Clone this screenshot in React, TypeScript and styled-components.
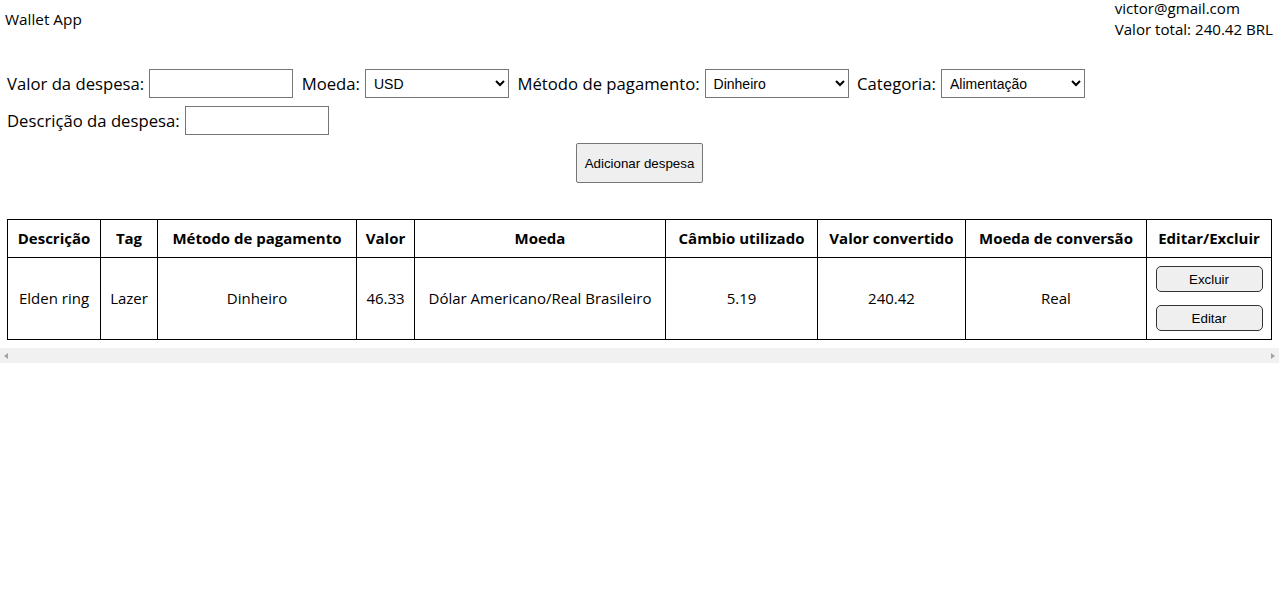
import React from 'react';
import styled, { createGlobalStyle } from 'styled-components';

const GlobalStyle = createGlobalStyle`
  body {
    margin: 0;
    background: #ffffff;
    color: #000000;
    font-family: 'Open Sans', 'Noto Sans', sans-serif;
    font-size: 15.3px;
  }
`;

const Page = styled.div`
  display: flex;
  flex-direction: column;
`;

const Header = styled.header`
  display: flex;
  justify-content: space-between;
  align-items: center;
  margin-top: -2px;
  padding: 0 6px 0 5px;
  line-height: 21px;
`;

const Brand = styled.span`
  font-size: 15.3px;
`;

const UserInfo = styled.div`
  display: flex;
  flex-direction: column;
  font-size: 15.1px;
`;

const Form = styled.form`
  display: flex;
  flex-wrap: wrap;
  align-items: center;
  column-gap: 8.5px;
  row-gap: 8px;
  padding: 0 7px;
  margin-top: 29px;
`;

const Field = styled.label`
  display: flex;
  align-items: center;
  gap: 5px;
  font-size: 16.7px;
  line-height: 21px;
`;

const TextInput = styled.input`
  box-sizing: border-box;
  width: 144px;
  height: 29px;
  border: 1px solid #767676;
  border-radius: 0;
  padding: 0 4px;
  font-family: Arial, 'Liberation Sans', sans-serif;
  font-size: 13.33px;
`;

const Select = styled.select`
  box-sizing: border-box;
  width: 144px;
  height: 29px;
  border: 1px solid #767676;
  border-radius: 0;
  background: #ffffff;
  padding: 0 4px;
  font-family: Arial, 'Liberation Sans', sans-serif;
  font-size: 14px;
  color: #000000;
`;

const Actions = styled.div`
  display: flex;
  justify-content: center;
  margin-top: 8px;
`;

const Button = styled.button<{ $wide?: boolean }>`
  box-sizing: border-box;
  height: ${p => (p.$wide ? '40px' : '26px')};
  width: ${p => (p.$wide ? 'auto' : '107px')};
  padding: 0 8px;
  background: #efefef;
  border: 1px solid ${p => (p.$wide ? '#767676' : '#333333')};
  border-radius: ${p => (p.$wide ? '2px' : '5px')};
  font-family: Arial, 'Liberation Sans', sans-serif;
  font-size: 13.33px;
  color: #000000;
  cursor: pointer;
`;

const TableArea = styled.div`
  margin-top: 36px;
  padding: 0 8px 0 7px;
`;

const Table = styled.table`
  width: 100%;
  table-layout: fixed;
  border-collapse: collapse;
  font-size: 15px;
  line-height: 21px;
`;

const Th = styled.th<{ $w: number }>`
  width: ${p => p.$w - 1}px;
  border: 1px solid #000000;
  padding: 8px 0;
  font-weight: 700;
  text-align: center;
  white-space: nowrap;
`;

const Td = styled.td`
  border: 1px solid #000000;
  padding: 8px 0;
  text-align: center;
  white-space: nowrap;
`;

const ButtonStack = styled.div`
  display: flex;
  flex-direction: column;
  align-items: center;
  gap: 13px;
`;

const ScrollBar = styled.div`
  margin-top: 8px;
  height: 15px;
  background: #f1f1f1;
  display: flex;
  justify-content: space-between;
  align-items: center;
  padding: 0 4px;
`;

const Arrow = styled.span<{ $dir: 'left' | 'right' }>`
  width: 0;
  height: 0;
  border-top: 3.5px solid transparent;
  border-bottom: 3.5px solid transparent;
  ${p =>
    p.$dir === 'left'
      ? 'border-right: 4px solid #a3a3a3;'
      : 'border-left: 4px solid #a3a3a3;'}
`;

const columns = [
  { label: 'Descrição', w: 93 },
  { label: 'Tag', w: 57 },
  { label: 'Método de pagamento', w: 199 },
  { label: 'Valor', w: 58 },
  { label: 'Moeda', w: 251 },
  { label: 'Câmbio utilizado', w: 152 },
  { label: 'Valor convertido', w: 148 },
  { label: 'Moeda de conversão', w: 181 },
  { label: 'Editar/Excluir', w: 125 },
];

const expenses = [
  {
    id: 0,
    description: 'Elden ring',
    tag: 'Lazer',
    method: 'Dinheiro',
    value: '46.33',
    currency: 'Dólar Americano/Real Brasileiro',
    rate: '5.19',
    converted: '240.42',
    target: 'Real',
  },
];

export default function App() {
  return (
    <Page>
      <GlobalStyle />
      <Header>
        <Brand>Wallet App</Brand>
        <UserInfo>
          <span>victor@gmail.com</span>
          <span>Valor total: 240.42 BRL</span>
        </UserInfo>
      </Header>

      <Form onSubmit={e => e.preventDefault()}>
        <Field>
          Valor da despesa:
          <TextInput type="text" />
        </Field>
        <Field>
          Moeda:
          <Select defaultValue="USD">
            <option>USD</option>
            <option>CAD</option>
            <option>EUR</option>
          </Select>
        </Field>
        <Field>
          Método de pagamento:
          <Select defaultValue="Dinheiro">
            <option>Dinheiro</option>
            <option>Cartão de crédito</option>
            <option>Cartão de débito</option>
          </Select>
        </Field>
        <Field>
          Categoria:
          <Select defaultValue="Alimentação">
            <option>Alimentação</option>
            <option>Lazer</option>
            <option>Trabalho</option>
            <option>Transporte</option>
            <option>Saúde</option>
          </Select>
        </Field>
        <Field>
          Descrição da despesa:
          <TextInput type="text" />
        </Field>
      </Form>

      <Actions>
        <Button type="button" $wide>
          Adicionar despesa
        </Button>
      </Actions>

      <TableArea>
        <Table>
          <thead>
            <tr>
              {columns.map(c => (
                <Th key={c.label} $w={c.w}>
                  {c.label}
                </Th>
              ))}
            </tr>
          </thead>
          <tbody>
            {expenses.map(e => (
              <tr key={e.id}>
                <Td>{e.description}</Td>
                <Td>{e.tag}</Td>
                <Td>{e.method}</Td>
                <Td>{e.value}</Td>
                <Td>{e.currency}</Td>
                <Td>{e.rate}</Td>
                <Td>{e.converted}</Td>
                <Td>{e.target}</Td>
                <Td>
                  <ButtonStack>
                    <Button type="button">Excluir</Button>
                    <Button type="button">Editar</Button>
                  </ButtonStack>
                </Td>
              </tr>
            ))}
          </tbody>
        </Table>
      </TableArea>
      <ScrollBar>
        <Arrow $dir="left" />
        <Arrow $dir="right" />
      </ScrollBar>
    </Page>
  );
}
